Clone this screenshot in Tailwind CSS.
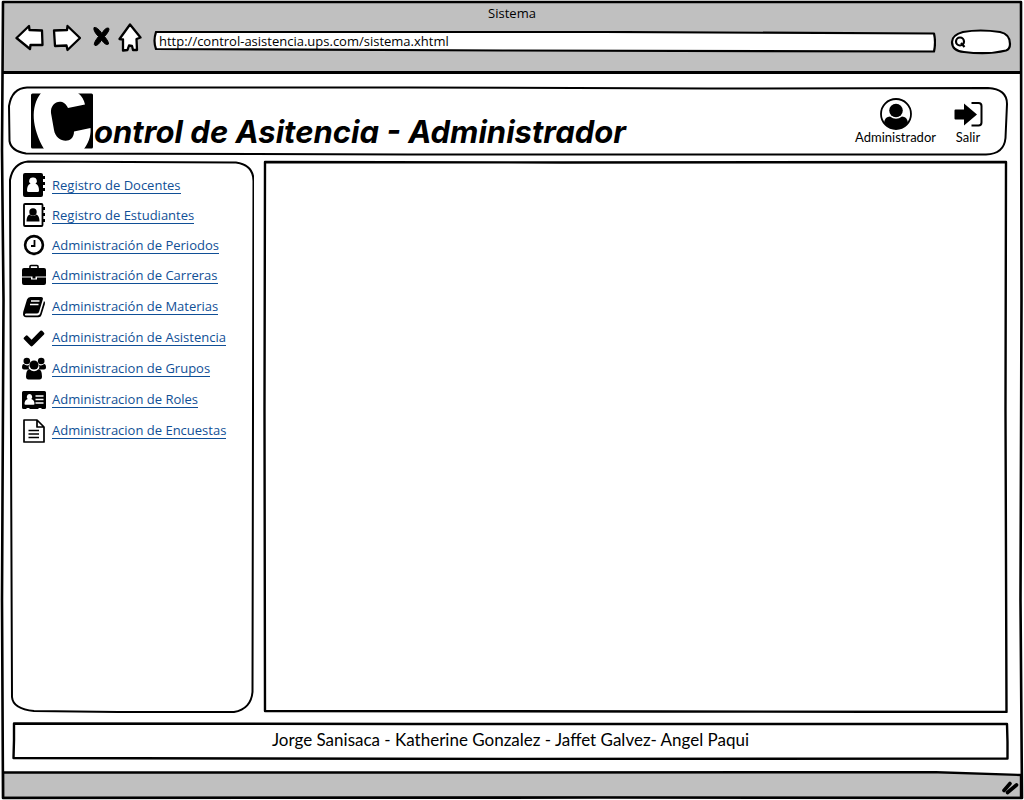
<!DOCTYPE html>
<html lang="es">
<head>
<meta charset="utf-8">
<meta name="viewport" content="width=device-width, initial-scale=1">
<title>Sistema</title>
<script src="https://cdn.jsdelivr.net/npm/@tailwindcss/browser@4"></script>
</head>
<body class="bg-white text-black font-['Open_Sans','Noto_Sans',sans-serif] text-[13px] leading-4">
<div class="relative isolate flex min-h-screen flex-col">

  <header class="bg-[#c0c0c0] px-[15px] pt-[5px] h-[74px] border-b-3 border-black">
    <p class="text-center">Sistema</p>
    <div class="flex items-center">
      <nav class="flex items-center" aria-label="Navegación">
        <button type="button" aria-label="Atrás" class="mr-2"><svg class="block h-8 w-[29px]" viewBox="0 0 29 32" fill="#fff" stroke="#000" stroke-width="2.300" stroke-linejoin="round"><path d="M1.500 16 14 4 14.500 8 27 8.500 27.500 23 15.500 23 15 27Z"/></svg></button>
        <button type="button" aria-label="Adelante" class="mr-[10px]"><svg class="block h-8 w-[29px]" viewBox="0 0 29 32" fill="#fff" stroke="#000" stroke-width="2.300" stroke-linejoin="round"><path d="M2 8.500 15 8 15.500 4 28 16 15.500 28 14.500 23.500 3 24Z"/></svg></button>
        <button type="button" aria-label="Detener" class="mr-[7px]"><svg class="block h-8 w-[20px]" viewBox="0 0 20 32" fill="#000" stroke="#000" stroke-width="1" stroke-linejoin="round"><path d="M3 5.500Q6 4.500 11 11.500 14 5.500 17.500 6 19.500 8 13.500 14.500 18 20 17.500 22 15 24 10.500 18 7 24 4 23.500 1.500 22 7.500 14.500 2 9 3 5.500Z"/></svg></button>
        <button type="button" aria-label="Inicio" class="mr-[11px]"><svg class="block h-8 w-[24px]" viewBox="0 0 24 32" fill="#fff" stroke="#000" stroke-width="2.300" stroke-linejoin="round"><path d="M12 2.500 22.500 15.500 18.500 17 19 28 15 28 14 24 11 23.500 9.500 28 5 28.500 5 17.500 1.500 17Z"/></svg></button>
      </nav>
      <label class="relative mt-2 flex h-[22px] flex-1 items-center">
        <svg class="absolute inset-0 size-full" viewBox="0 0 783 22" preserveAspectRatio="none" fill="#fff" stroke="#000" stroke-width="2.200" stroke-linejoin="round" aria-hidden="true"><path d="M3 1 450 1 781 2.500Q783 11 781 20.500L350 19.500 3 18Q0 10 3 1Z"/></svg>
        <input type="text" aria-label="Dirección" value="http://control-asistencia.ups.com/sistema.xhtml" class="relative w-full bg-transparent px-[6px] pb-[3px] text-[13px] leading-4 outline-none">
      </label>
      <label class="relative mt-2 ml-[14px] mr-[-3px] flex h-[26px] w-[62px] items-center">
        <svg class="absolute inset-0 size-full" viewBox="0 0 62 26" fill="#fff" stroke="#000" stroke-width="2.200" aria-hidden="true"><path d="M13 3Q30 0 50 3 60 5 60 15 60 20 56 21.500 38 26 14 23 2 22 2 13 2 6 13 3Z"/><circle cx="10" cy="12.500" r="4"/><path d="M11 14 14.500 18"/></svg>
        <input type="search" aria-label="Buscar" class="relative ml-5 w-8 bg-transparent outline-none">
      </label>
    </div>
  </header>

  <div class="flex flex-1 flex-col pt-3 pr-4 pb-[11px] pl-2">
    <section class="relative flex h-[70px] items-start justify-between pr-[22px] pl-[22px]">
      <svg class="absolute inset-0 -z-10 size-full" viewBox="0 0 1000 70" preserveAspectRatio="none" fill="#fff" stroke="#000" stroke-width="2" aria-hidden="true"><path d="M19 1.500 400 1.500 700 2.500 980 2Q999 3 999 18L997.500 52Q996 68 978 68.500L400 68.500 18 67.500Q3 65 1.500 55L1 20Q4 2 19 1.500Z"/></svg>
      <h1 class="flex items-start font-['Inter',sans-serif] text-[31px] leading-[38px] font-bold italic">
        <svg class="mt-[7px] h-[56px] w-[64px]" viewBox="0 0 64 56" role="img" aria-label="C"><rect x="1" y=".5" width="62" height="55" rx="1.500"/><path fill="#fff" d="M11 0C0 14 2 35 14 56H54C60 48 61 40 60.500 35L44 38.500C44 52 26 50 24 37L21 20C20 9 33 4 38 15L55 11.500C54 7 52 3 48 0Z"/></svg>
        <span class="mt-[27px]">ontrol de Asitencia - Administrador</span>
      </h1>
      <div class="flex gap-4 pt-3 pr-[2px] font-['Lato',sans-serif]">
        <button type="button" class="flex flex-col items-center">
          <svg class="-mb-px h-8 w-8" viewBox="0 0 32 32"><circle cx="16" cy="16" r="15" fill="#fff" stroke="#000" stroke-width="1.800"/><circle cx="16" cy="12.500" r="6.800"/><path d="M10 18.500Q16 23 22 18.500Q27 18.500 28 24.500Q23 31 16 31T4 24.500Q5 18.500 10 18.500Z"/></svg>
          <span>Administrador</span>
        </button>
        <button type="button" class="flex flex-col items-center">
          <svg class="-mb-px h-8 w-8" viewBox="0 0 32 32"><path d="M3.500 11.500H12V5.500L25 16.500 12 27.500V21.500H3.500Q2.500 21.500 2.500 20.500V12.500Q2.500 11.500 3.500 11.500Z"/><path d="M19.500 5H26.500Q29.500 5 29.500 8V24.500Q29.500 27.500 26.500 27.500H19.500" fill="none" stroke="#000" stroke-width="2"/></svg>
          <span>Salir</span>
        </button>
      </div>
    </section>

    <div class="mt-[4px] flex flex-1 gap-[9px]">
      <aside class="relative w-[246px] shrink-0 pt-[10px] pl-[14px]">
        <svg class="absolute inset-0 -z-10 size-full" viewBox="0 0 246 553" preserveAspectRatio="none" fill="#fff" stroke="#000" stroke-width="2" aria-hidden="true"><path d="M20 1.500 120 2 228 2.500Q246 5 245.500 22L245 250 244.500 532Q243 549 226 552L110 552 26 551Q5 549 4 537L2.500 150 2 20Q5 3 20 1.500Z"/></svg>
        <nav aria-label="Menú">
          <ul class="text-[#104f96]">
            <li class="flex h-[30px] items-center gap-[6px]"><svg class="size-6 text-black" viewBox="0 0 24 24" fill="currentColor"><rect x="1" y="0" width="20" height="24" rx="2"/><path d="M21 3h2v3h-2zM21 9h2v3h-2zM21 15h2v3h-2z"/><path fill="#fff" d="M11 4.500a3.500 3.500 0 0 1 2.500 6.300Q17 12 17 17.500q0 1.500-1.500 1.500h-9Q5 19 5 17.500 5 12 8.500 10.800A3.500 3.500 0 0 1 11 4.500Z"/></svg><a href="#docentes" class="border-b border-current">Registro de Docentes</a></li>
            <li class="flex h-[30px] items-center gap-[6px]"><svg class="size-6 text-black" viewBox="0 0 24 24" fill="currentColor"><rect x="2" y="1" width="18.500" height="22" rx="1" fill="#fff" stroke="currentColor" stroke-width="1.800"/><path d="M21 4h2v3h-2zM21 10h2v3h-2zM21 16h2v3h-2z"/><circle cx="11" cy="9" r="3.700"/><path d="M7.500 11.500Q11 14.500 14.500 11.500 17.500 13 17.500 18.500H4.500Q4.500 13 7.500 11.500Z"/></svg><a href="#estudiantes" class="border-b border-current">Registro de Estudiantes</a></li>
            <li class="flex h-[30px] items-center gap-[6px]"><svg class="size-6 text-black" viewBox="0 0 24 24" fill="none" stroke="currentColor"><circle cx="12" cy="12" r="8.900" stroke-width="2.600"/><path d="M12.500 7V13H9" stroke-width="1.800"/></svg><a href="#periodos" class="border-b border-current">Administración de Periodos</a></li>
            <li class="flex h-[31px] items-center gap-[6px]"><svg class="size-6 text-black" viewBox="0 0 24 24" fill="currentColor"><path fill="none" stroke="currentColor" stroke-width="1.600" d="M8 5V2.500Q8 1.500 9 1.500H15Q16 1.500 16 2.500V5"/><path d="M2 4H22Q24 4 24 6V12.500H0V6Q0 4 2 4ZM0 13.500H9V15.500H15V13.500H24V19Q24 21 22 21H2Q0 21 0 19ZM10.500 12.500H13.500V14.500H10.500Z"/></svg><a href="#carreras" class="border-b border-current">Administración de Carreras</a></li>
            <li class="flex h-[31px] items-center gap-[6px]"><svg class="size-6 text-black" viewBox="0 0 24 24" fill="currentColor"><path d="M8.500 2H19Q21.500 2 20.800 4.500L17 17Q16.500 18.500 14.500 18.500H4Q2.500 18.800 3 20 3.300 20.600 4.500 20.600H15.500Q17.500 20.600 18.200 18.500L22 6Q23.500 7 22.900 9L19.500 20Q18.800 22.300 16.500 22.300H4Q1.500 22.300 1 19.500L1.200 17 5 4.500Q5.800 2 8.500 2Z"/><path d="M9 6H17.500M8 9.500H16.500" stroke="#fff" stroke-width="1.300"/></svg><a href="#materias" class="border-b border-current">Administración de Materias</a></li>
            <li class="flex h-[31px] items-center gap-[6px]"><svg class="size-6 text-black" viewBox="0 0 1792 1792" fill="currentColor"><path d="M1671 566q0 40-28 68l-724 724-136 136q-28 28-68 28t-68-28l-136-136-362-362q-28-28-28-68t28-68l136-136q28-28 68-28t68 28l294 295 656-657q28-28 68-28t68 28l136 136q28 28 28 68z"/></svg><a href="#asistencia" class="border-b border-current">Administración de Asistencia</a></li>
            <li class="flex h-[31px] items-center gap-[6px]"><svg class="size-6 text-black" viewBox="0 0 24 24" fill="currentColor"><circle cx="4.800" cy="4" r="3.300"/><circle cx="19.200" cy="4" r="3.300"/><path d="M1.800 7Q5 9.500 7 7.700 6 12 8 12.500H2Q0 12.500 0 10.500 0 7 1.800 7ZM22.200 7Q19 9.500 17 7.700 18 12 16 12.500H22Q24 12.500 24 10.500 24 7 22.200 7Z"/><circle cx="12" cy="8" r="4.600"/><path d="M7.500 12.300Q12 16 16.500 12.300 20 12.500 20 19.500 20 22.500 17.500 22.500H6.500Q4 22.500 4 19.500 4 12.500 7.500 12.300Z"/></svg><a href="#grupos" class="border-b border-current">Administracion de Grupos</a></li>
            <li class="flex h-[31px] items-center gap-[6px]"><svg class="size-6 text-black" viewBox="0 0 24 24" fill="currentColor"><path d="M1.500 3H22.500Q24 3 24 4.500V19.500Q24 21 22.500 21H19.500V20H16.500V21H7.500V20H4.500V21H1.500Q0 21 0 19.500V4.500Q0 3 1.500 3Z"/><path fill="#fff" d="M7.500 6a2.900 2.900 0 0 1 1.800 5Q12.500 12 12.500 16q0 .8-1 .8H3.500q-1 0-1-.8 0-4 3.200-5A2.900 2.900 0 0 1 7.500 6Z"/><path d="M13.500 8H21.500M13.500 11.500H21.500M13.500 15H21.500" stroke="#fff" stroke-width="1.500"/></svg><a href="#roles" class="border-b border-current">Administracion de Roles</a></li>
            <li class="flex h-[31px] items-center gap-[6px]"><svg class="size-6 text-black" viewBox="0 0 24 24" fill="none" stroke="currentColor" stroke-width="1.700" stroke-linejoin="round"><path d="M2 1H15L22 8V23H2ZM15 1V8H22"/><path d="M6.500 11.500H17M6.500 15H17M6.500 18.500H17" stroke-width="1.600"/></svg><a href="#encuestas" class="border-b border-current">Administracion de Encuestas</a></li>
          </ul>
        </nav>
      </aside>
      <main class="relative flex-1" aria-label="Contenido">
        <svg class="absolute inset-0 size-full" viewBox="0 0 745 553" preserveAspectRatio="none" fill="#fff" stroke="#000" stroke-width="2.400" stroke-linejoin="round" aria-hidden="true"><path d="M2 2 300 2.500 743 2 742.500 250 743.500 552 400 551.500 2 551 1.500 250Z"/></svg>
      </main>
    </div>

    <footer class="relative mt-[9px] -mr-px ml-1 flex h-[38px] items-center justify-center font-['Lato',sans-serif] text-[17px] leading-6">
      <svg class="absolute inset-0 -z-10 size-full" viewBox="0 0 997 38" preserveAspectRatio="none" fill="#fff" stroke="#000" stroke-width="2.400" stroke-linejoin="round" aria-hidden="true"><path d="M2 1.500 400 2 995 2 995.500 20 995.500 36.500 500 37 1.500 36 2 18Z"/></svg>
      <p class="pb-[2px]">Jorge Sanisaca - Katherine Gonzalez - Jaffet Galvez- Angel Paqui</p>
    </footer>
  </div>

  <div class="relative h-[29px]">
    <svg class="block size-full" viewBox="0 0 1024 29" preserveAspectRatio="none" aria-hidden="true"><path d="M3 1.500 500 1.500 930 1 1021 4V27H3Z" fill="#c0c0c0" stroke="#000" stroke-width="2.400"/></svg>
    <svg class="absolute right-[5px] bottom-[5px] h-4 w-[18px]" viewBox="0 0 18 16" fill="none" stroke="#000" stroke-width="3.600" stroke-linecap="round" aria-hidden="true"><path d="M3 11.500 9 4.500M6.500 13.500 15.500 6"/></svg>
  </div>

  <!-- Window outline -->
  <svg class="pointer-events-none absolute inset-0 size-full" viewBox="0 0 1024 800" preserveAspectRatio="none" fill="none" aria-hidden="true">
    <path d="M0 0H1024V800H0ZM3 2V798H1021V2Z" fill="#fff" fill-rule="evenodd"/>
    <path d="M3 2 1021 2 1021.500 300 1020.500 600 1022 798 600 797.500 3 798 2 600 3.500 300 2 150Z" stroke="#000" stroke-width="2.600" stroke-linejoin="round"/>
  </svg>
</div>
</body>
</html>
